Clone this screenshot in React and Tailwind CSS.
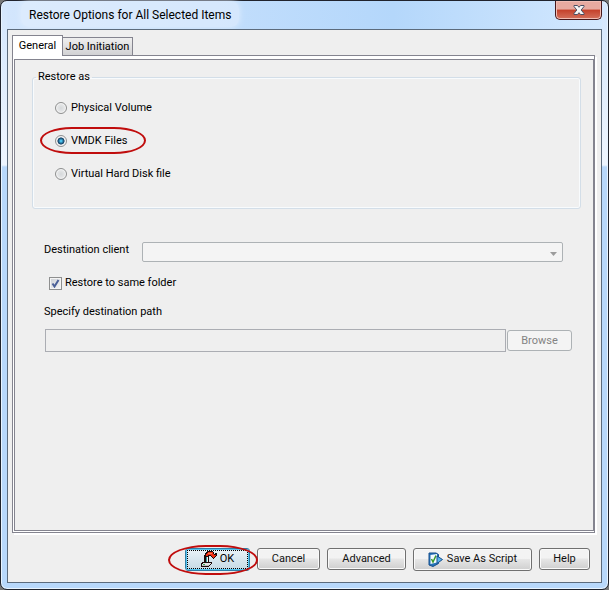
import React, { useState } from 'react';

const restoreTypes = ['Physical Volume', 'VMDK Files', 'Virtual Hard Disk file'];

const buttonClass =
  'flex items-center justify-center rounded-[3px] border border-[#707070] bg-linear-to-b from-[#f3f3f3] from-45% via-[#e6e6e6] via-50% to-[#cfcfcf] text-[#111] shadow-[inset_0_0_0_1px_#fafafa]';

function CloseIcon() {
  return (
    <svg width="12" height="10" viewBox="0 0 12 10" aria-hidden="true">
      <path d="M1 .5h3.500L6 2.300 7.500.5H11v1L8.200 5 11 8.500v1H7.500L6 7.700 4.500 9.500H1v-1L3.800 5 1 1.500z" fill="#f6f6f6" stroke="#4b4f63" />
    </svg>
  );
}

function RestoreIcon() {
  return (
    <svg width="16" height="16" viewBox="0 0 16 16" shapeRendering="crispEdges" aria-hidden="true">
      <path d="M3 4h1V2h1V1h1V0h6v1h1v2h1V2h2v3h-1v1h-1v1h-1v1h-1V7h-1V6h-1V5H8v6h3v2h-1v1H9v1H8v1H0v-4h1v-1h2z" fill="#1c0a0a" />
      <path d="M5 3h1V2h1V1h5v2h1v1h2v1h-1v1h-1v1h-1V6h-1V5h-1V4H7v1H5z" fill="#f02c10" />
      <path d="M7 2h4v1H7z" fill="#ff7a52" />
      <path d="M5 6h1v5H5z" fill="#2f9e9e" />
      <path d="M6 6h1v5H6z" fill="#f2f2f2" />
      <path d="M2 12h8v1H9v1H1v-1h1z" fill="#e4e4e4" />
      <path d="M1 14h7v1H1z" fill="#bdbdbd" />
      <path d="M2 13h2v1H2z" fill="#3aa655" />
    </svg>
  );
}

function ScriptIcon() {
  return (
    <svg width="15" height="15" viewBox="0 0 15 15" aria-hidden="true">
      <path d="M1 1h7l2.500 1.500v9L5 14.500 1 13z" fill="#2673b8" stroke="#174f8c" />
      <path d="M2.500 3l6.500-1v8.500l-6.500 1.500z" fill="#f4faff" />
      <path d="M3.500 7l1.500 3L8 3.500" fill="none" stroke="#3a9a2c" strokeWidth="1.500" />
      <path d="M9 4l5.500 3.500L9 11.500z" fill="#58b4ee" stroke="#174f8c" />
    </svg>
  );
}

// Red outline drawn over the control that the reader should pick
function Highlight({ className }) {
  return <span className={`pointer-events-none absolute border-2 border-[#c00d0d] ${className}`} />;
}

function App() {
  const [restoreAs, setRestoreAs] = useState('VMDK Files');
  const [sameFolder, setSameFolder] = useState(true);

  return (
    <div className="min-h-screen bg-[#777]">
      <div className="flex min-h-screen flex-col rounded-[7px] border border-[#20232d] bg-[linear-gradient(#d3e6fd,#eef5fe_164px,#b8d8fb_166px)] px-[6px] pb-[6px] font-[Roboto,'Noto_Sans',sans-serif] text-[11px] leading-4 text-black shadow-[inset_0_0_0_1px_#e8f4ff]">
        <header className="flex h-7 items-start justify-between bg-linear-to-r from-[#d3e6fd] via-[#b4d7fb] via-65% to-[#d3e8fe]">
          <h1 className="ml-[14px] rounded-lg bg-[#e3effd]/60 px-2 pt-[6px] pb-1 text-[12px] shadow-[0_0_6px_#e3effd]">Restore Options for All Selected Items</h1>
          <button
            aria-label="Close"
            className="flex h-[19px] w-[47px] items-center justify-center rounded-b-[5px] border border-t-0 border-[#47181b] bg-linear-to-b from-[#e7aaa0] from-45% via-[#c4402a] via-50% to-[#d4705c] shadow-[inset_0_0_0_1px_#f0bdb4]"
          >
            <CloseIcon />
          </button>
        </header>

        <main className="flex flex-1 flex-col border border-[#5c6b7c] bg-[#efefef] px-1 pt-[5px]">
          <div role="tablist" className="flex items-end">
            <button role="tab" aria-selected="true" className="z-10 -mb-px h-[21px] w-[51px] border border-b-0 border-[#84848f] bg-white">
              General
            </button>
            <button role="tab" aria-selected="false" className="h-[18px] w-[70px] border border-b-0 border-l-0 border-[#84848f] bg-linear-to-b from-[#efefef] to-[#d2d2d4] pt-px">
              Job Initiation
            </button>
          </div>

          <div role="tabpanel" className="mr-[2px] flex flex-1 flex-col border border-[#84848f] bg-white pt-[3px] pb-px pl-px shadow-[2px_2px_0_#fff]">
            <div className="flex-1 border border-[#84848f] bg-[#efefef] pt-[9px] pr-3 pl-[17px]">
              <fieldset className="rounded-[3px] border border-[#d3dee8] pb-[26px] pl-[22px] shadow-[inset_0_0_0_1px_#f8fbfd]">
                <legend className="-ml-[19px] px-[2px]">Restore as</legend>
                <div className="flex flex-col gap-[17px] pt-[15px]">
                  {restoreTypes.map((type) => (
                    <label key={type} className="relative flex items-center gap-1 self-start">
                      <input
                        type="radio"
                        name="restoreAs"
                        checked={restoreAs === type}
                        onChange={() => setRestoreAs(type)}
                        className="size-3 appearance-none rounded-full border border-[#8e8f8f] bg-radial from-[#d5d8da] to-[#f4f4f4] shadow-[inset_0_0_0_1px_#f4f4f4] checked:from-[#4bc3ee] checked:from-10% checked:via-[#123b5e] checked:via-45% checked:to-[#f4f4f4] checked:to-55%"
                      />
                      {type}
                      {type === 'VMDK Files' && (
                        <Highlight className="-top-[6px] -left-[15px] h-[27px] w-[106px] rounded-[30%/50%]" />
                      )}
                    </label>
                  ))}
                </div>
              </fieldset>

              <div className="mt-[33px] mr-[18px] ml-3 flex items-start">
                <label htmlFor="client" className="w-[98px]">Destination client</label>
                <div className="relative flex-1">
                  <select id="client" disabled className="block h-[20px] w-full appearance-none rounded-[2px] border border-[#adb2b5] bg-[#f4f4f4]" />
                  <svg className="pointer-events-none absolute top-[10px] right-[6px]" width="7" height="4" viewBox="0 0 7 4" aria-hidden="true">
                    <path d="M0 0h7L3.500 4z" fill="#9c9c9c" />
                  </svg>
                </div>
              </div>

              <label className="mt-[13px] ml-[17px] flex items-center gap-[3px]">
                <span className="relative flex">
                  <input
                    type="checkbox"
                    checked={sameFolder}
                    onChange={(e) => setSameFolder(e.target.checked)}
                    className="size-[13px] appearance-none border border-[#8e8f8f] bg-linear-to-br from-[#cbcfd5] to-[#f6f6f6] shadow-[inset_0_0_0_1px_#f4f4f4]"
                  />
                  {sameFolder && (
                    <svg className="pointer-events-none absolute top-[2px] left-[2px]" width="9" height="9" viewBox="0 0 9 9" aria-hidden="true">
                      <path d="M1.500 4.500L3.500 7.500 7.500 1" fill="none" stroke="#4a5f97" strokeWidth="2" />
                    </svg>
                  )}
                </span>
                Restore to same folder
              </label>

              <label htmlFor="path" className="mt-[13px] ml-3 block">Specify destination path</label>
              <div className="mt-[9px] mr-[9px] ml-[13px] flex items-center gap-px">
                <input id="path" type="text" disabled className="h-[23px] min-w-0 flex-1 border border-[#abadb3] bg-[#efefef] px-1" />
                <button disabled className="h-[21px] w-[65px] rounded-[3px] border border-[#adb2b5] bg-[#f4f4f4] text-[#838383]">
                  Browse
                </button>
              </div>
            </div>
          </div>

          <footer className="flex h-[49px] items-center justify-end gap-[7px] pt-[3px] pr-[7px]">
            <div className="relative">
              <button className="block h-[23px] w-[65px] rounded-[3px] border border-[#2f7fa8] bg-linear-to-b from-[#eaf3f8] to-[#c5d9e4] p-px shadow-[inset_0_0_0_1px_#55c4ee]">
                <span className="flex h-full items-center justify-center gap-[3px] border border-dotted border-black">
                  <RestoreIcon />
                  OK
                </span>
              </button>
              <Highlight className="-top-[3px] -left-[17px] h-[30px] w-[90px] rounded-[42%/50%]" />
            </div>
            <button className={`${buttonClass} h-[22px] w-[63px]`}>Cancel</button>
            <button className={`${buttonClass} h-[22px] w-[79px]`}>Advanced</button>
            <button className={`${buttonClass} h-[23px] w-[119px] gap-1`}>
              <ScriptIcon />
              Save As Script
            </button>
            <button className={`${buttonClass} h-[22px] w-[51px]`}>Help</button>
          </footer>
        </main>
      </div>
    </div>
  );
}

export default App;
